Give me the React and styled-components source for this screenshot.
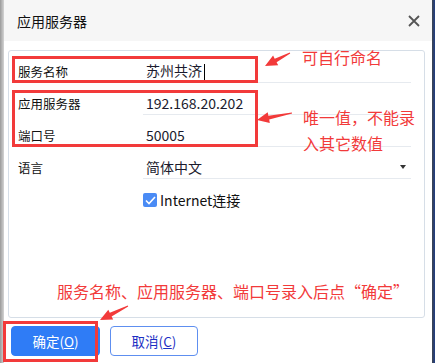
import React from "react";
import styled, { createGlobalStyle } from "styled-components";

const GlobalStyle = createGlobalStyle`
  html, body {
    margin: 0;
    padding: 0;
    background: #ffffff;
  }
  body {
    font-family: "Noto Sans CJK SC", "Noto Sans", sans-serif;
  }
`;

const RED = "#f23a3a";

const Screen = styled.div`
  position: relative;
  display: flex;
  width: 435px;
  height: 363px;
  overflow: hidden;
`;

const LeftEdge = styled.div`
  width: 4px;
  background: linear-gradient(to right, #9a9a9a, #d4d4d4);
`;

const RightEdge = styled.div`
  width: 3px;
  background: linear-gradient(to right, #3f4650, #1f3d86);
`;

const Dialog = styled.div`
  flex: 1;
  display: flex;
  flex-direction: column;
  background: #ffffff;
`;

const TitleBar = styled.div`
  height: 41px;
  flex-shrink: 0;
  display: flex;
  align-items: center;
  justify-content: space-between;
  padding: 0 12px 0 13px;
  background: #f6f6f6;
`;

const Title = styled.span`
  font-size: 14px;
  color: #111;
`;

const CloseIcon = styled.svg`
  width: 12px;
  height: 12px;
`;

const Panel = styled.div`
  margin: 9px 7px 0 4px;
  height: 268px;
  border: 1px solid #d6dee7;
  border-radius: 3px;
  padding: 0 13px 0 8px;
  box-sizing: border-box;
  display: flex;
  flex-direction: column;
`;

const Row = styled.div`
  display: grid;
  grid-template-columns: 126px 1fr;
  height: 32px;
  padding-top: 8px;
  box-sizing: border-box;
  align-items: center;
`;

const Label = styled.span`
  font-size: 12.5px;
  color: #111;
  padding-left: 1px;
`;

const Field = styled.div`
  height: 100%;
  display: flex;
  align-items: center;
  justify-content: space-between;
  padding-left: 3px;
  border-bottom: 1px solid #e6eaef;
  box-sizing: border-box;
  font-size: 14px;
  color: #1b1b2e;
`;

const Caret = styled.span`
  display: inline-block;
  width: 1px;
  height: 17px;
  margin-left: 2px;
  background: #000;
  vertical-align: middle;
`;

const DropArrow = styled.span`
  width: 0;
  height: 0;
  margin-right: 5px;
  border-left: 3.5px solid transparent;
  border-right: 3.5px solid transparent;
  border-top: 4px solid #333;
`;

const CheckRow = styled.label`
  display: flex;
  align-items: center;
  gap: 3px;
  margin: 11px 0 0 126px;
  font-size: 14px;
  color: #111;
`;

const CheckBox = styled.span`
  width: 14px;
  height: 14px;
  border-radius: 2px;
  background: #4a8bf5;
  display: flex;
  align-items: center;
  justify-content: center;
`;

const Footer = styled.div`
  display: flex;
  gap: 10px;
  padding: 8px 0 0 7px;
`;

const Button = styled.button`
  width: ${(p) => (p.$primary ? "89px" : "88px")};
  height: 30px;
  border-radius: 4px;
  border: 1px solid ${(p) => (p.$primary ? "#2f7cf6" : "#5e8ff0")};
  background: ${(p) => (p.$primary ? "#2f7cf6" : "#ffffff")};
  color: ${(p) => (p.$primary ? "#ffffff" : "#1c2fc4")};
  font-family: "Noto Sans CJK SC", "Noto Sans", sans-serif;
  font-size: 13.5px;
  padding: 0;
  cursor: pointer;
`;

const Key = styled.span`
  text-decoration: underline;
`;

const Mark = styled.div`
  position: absolute;
  left: ${(p) => p.$x}px;
  top: ${(p) => p.$y}px;
  width: ${(p) => p.$w}px;
  height: ${(p) => p.$h}px;
  border: 3px solid ${RED};
  box-sizing: border-box;
  pointer-events: none;
`;

const Note = styled.div`
  position: absolute;
  left: ${(p) => p.$x}px;
  top: ${(p) => p.$y}px;
  color: ${RED};
  font-size: 16px;
  line-height: 26px;
  white-space: nowrap;
`;

const Overlay = styled.svg`
  position: absolute;
  left: 0;
  top: 0;
  pointer-events: none;
`;

function arrowPoints(tx, ty, px, py) {
  const dx = px - tx;
  const dy = py - ty;
  const len = Math.hypot(dx, dy);
  const ux = dx / len;
  const uy = dy / len;
  const nx = -uy;
  const ny = ux;
  const bx = px - ux * 12;
  const by = py - uy * 12;
  const pts = [
    [tx + nx * 0.4, ty + ny * 0.4],
    [bx + nx * 2, by + ny * 2],
    [bx + nx * 5.5, by + ny * 5.5],
    [px, py],
    [bx - nx * 5.5, by - ny * 5.5],
    [bx - nx * 2, by - ny * 2],
    [tx - nx * 0.4, ty - ny * 0.4],
  ];
  return pts.map((p) => p.map((v) => v.toFixed(1)).join(",")).join(" ");
}

const arrows = [
  [290, 53, 265, 66],
  [292, 113, 257, 120],
  [128, 306, 100, 320],
];

export default function App() {
  return (
    <>
      <GlobalStyle />
      <Screen>
        <LeftEdge />
        <Dialog>
          <TitleBar>
            <Title>应用服务器</Title>
            <CloseIcon viewBox="0 0 12 12">
              <path d="M1 1 L11 11 M11 1 L1 11" stroke="#555" strokeWidth="1.8" />
            </CloseIcon>
          </TitleBar>
          <Panel>
            <Row>
              <Label>服务名称</Label>
              <Field>
                <span>
                  苏州共济
                  <Caret />
                </span>
              </Field>
            </Row>
            <Row>
              <Label>应用服务器</Label>
              <Field>192.168.20.202</Field>
            </Row>
            <Row>
              <Label>端口号</Label>
              <Field>50005</Field>
            </Row>
            <Row>
              <Label>语言</Label>
              <Field>
                <span>简体中文</span>
                <DropArrow />
              </Field>
            </Row>
            <CheckRow>
              <CheckBox>
                <svg width="11" height="9" viewBox="0 0 11 9">
                  <path d="M1 4.5 L4 7.5 L10 1" fill="none" stroke="#fff" strokeWidth="1.6" />
                </svg>
              </CheckBox>
              Internet连接
            </CheckRow>
          </Panel>
          <Footer>
            <Button $primary>
              确定(<Key>O</Key>)
            </Button>
            <Button>
              取消(<Key>C</Key>)
            </Button>
          </Footer>
        </Dialog>
        <RightEdge />

        <Mark $x={12} $y={56} $w={246} $h={27} />
        <Mark $x={12} $y={90} $w={246} $h={57} />
        <Mark $x={3} $y={321} $w={95} $h={41} />

        <Note $x={302} $y={44}>可自行命名</Note>
        <Note $x={303} $y={104}>
          唯一值，不能录
          <br />
          入其它数值
        </Note>
        <Note $x={57} $y={278}>服务名称、应用服务器、端口号录入后点“确定”</Note>

        <Overlay width="435" height="363" viewBox="0 0 435 363">
          {arrows.map((a, i) => (
            <polygon key={i} points={arrowPoints(...a)} fill={RED} />
          ))}
        </Overlay>
      </Screen>
    </>
  );
}
